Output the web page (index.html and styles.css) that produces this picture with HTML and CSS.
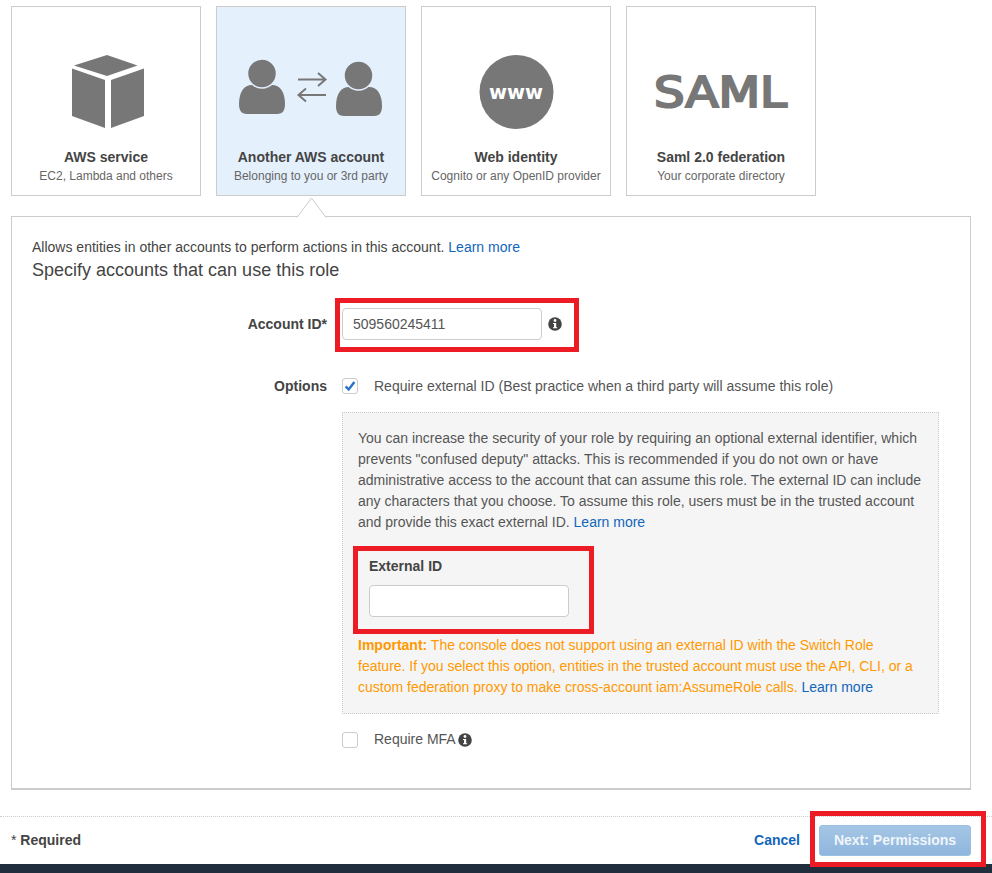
FILE: index.html
```html
<!DOCTYPE html>
<html lang="en">
<head>
<meta charset="utf-8">
<title>Create role</title>
<link rel="stylesheet" href="styles.css">
</head>
<body>
<div class="page">
  <div class="tiles">
    <div class="tile">
      <svg class="tile-icon" viewBox="12 7 188 130"><path class="ico" d="M107 55L137.500 65.500L107 76L74 65.500Z"/><path class="ico" d="M72 68.500L105 80V128L72 116Z"/><path class="ico" d="M144 68.500L111 80V128L144 116Z"/></svg>
      <div class="tile-title">AWS service</div>
      <div class="tile-sub">EC2, Lambda and others</div>
    </div>
    <div class="tile tile-active">
      <svg class="tile-icon" viewBox="217 7 188 130">
        <path class="ico" d="M239 104C239 92 244 85 252 85H272C280 85 285 92 285 104C285 110 283 114 277 114H247C241 114 239 110 239 104Z"/>
        <circle class="ico head" cx="262" cy="73.500" r="14.500"/>
        <path class="ico" d="M336 106C336 94 341 87 349 87H369C377 87 382 94 382 106C382 112 380 116 374 116H344C338 116 336 112 336 106Z"/>
        <circle class="ico head" cx="358.500" cy="75.500" r="14.500"/>
        <path class="arrow" d="M298 79.500H325M318 73L325.500 79.500L318 86"/>
        <path class="arrow" d="M326 95H299M306 88.500L298.500 95L306 101.500"/>
      </svg>
      <div class="tile-title">Another AWS account</div>
      <div class="tile-sub">Belonging to you or 3rd party</div>
    </div>
    <div class="tile">
      <svg class="tile-icon" viewBox="422 7 188 130"><circle class="ico" cx="516.500" cy="92" r="37"/><text class="www" x="489" y="99" textLength="54" lengthAdjust="spacingAndGlyphs">www</text></svg>
      <div class="tile-title">Web identity</div>
      <div class="tile-sub">Cognito or any OpenID provider</div>
    </div>
    <div class="tile">
      <svg class="tile-icon" viewBox="627 7 188 130"><text class="saml" x="654" y="107" textLength="133" lengthAdjust="spacingAndGlyphs">SAML</text></svg>
      <div class="tile-title">Saml 2.0 federation</div>
      <div class="tile-sub">Your corporate directory</div>
    </div>
  </div>

  <section class="panel">
    <svg class="tip" viewBox="0 0 32 22"><path d="M1 20.500L15.500 1L30 20.500" /></svg>
    <p class="intro">Allows entities in other accounts to perform actions in this account. <a class="link">Learn more</a></p>
    <h2 class="heading">Specify accounts that can use this role</h2>

    <div class="row row-account">
      <label class="row-label">Account ID*</label>
      <div class="row-field">
        <input class="text-input" type="text" value="509560245411">
        <svg class="info" viewBox="0 0 14 14"><use href="#i-info"/></svg>
      </div>
    </div>

    <div class="row row-options">
      <label class="row-label">Options</label>
      <div class="row-field">
        <span class="check check-on"><svg viewBox="0 0 16 16"><path d="M3 8.500L6.500 12L13 3.500" /></svg></span>
        <span class="check-label">Require external ID (Best practice when a third party will assume this role)</span>
      </div>
    </div>

    <div class="extbox">
      <p class="ext-text">You can increase the security of your role by requiring an optional external identifier, which prevents "confused deputy" attacks. This is recommended if you do not own or have administrative access to the account that can assume this role. The external ID can include any characters that you choose. To assume this role, users must be in the trusted account and provide this exact external ID. <a class="link">Learn more</a></p>
      <div class="ext-field">
        <label class="ext-label">External ID</label>
        <input class="text-input" type="text">
      </div>
      <p class="warn"><b>Important:</b> The console does not support using an external ID with the Switch Role feature. If you select this option, entities in the trusted account must use the API, CLI, or a custom federation proxy to make cross-account iam:AssumeRole calls. <a class="link">Learn more</a></p>
    </div>

    <div class="mfa">
      <span class="check"></span>
      <span class="check-label">Require MFA</span>
      <svg class="info info-mfa" viewBox="0 0 14 14"><use href="#i-info"/></svg>
    </div>
  </section>

  <footer class="foot">
    <div class="req"><span class="star">*</span> Required</div>
    <div class="actions">
      <a class="cancel">Cancel</a>
      <button class="next" type="button">Next: Permissions</button>
    </div>
  </footer>
  <div class="darkbar"></div>

  <div class="mark mark-account"></div>
  <div class="mark mark-ext"></div>
  <div class="mark mark-next"></div>
</div>
<svg class="defs" width="0" height="0"><defs><g id="i-info"><circle cx="7" cy="7" r="6.800" fill="#444"/><circle cx="7" cy="3.500" r="1.400" fill="#fff"/><path d="M5 6H8.200V10.200H9.200V11.300H5V10.200H6V7.100H5Z" fill="#fff"/></g></defs></svg>
</body>
</html>
```
FILE: styles.css
```css
* { box-sizing: border-box; }
html, body { margin: 0; padding: 0; background: #fff; }
body { font-family: "Liberation Sans", Arial, sans-serif; font-size: 14px; line-height: 21px; color: #444; overflow: hidden; }
.page { position: relative; width: 992px; height: 873px; overflow: hidden; }
.defs { position: absolute; }

.tiles { display: flex; gap: 15px; padding: 6px 0 0 11px; }
.tile { width: 190px; height: 190px; border: 1px solid #ccc; background: #fff; text-align: center; }
.tile-active { background: #e4f1fd; }
.tile-icon { display: block; width: 188px; height: 130px; margin-bottom: 10px; }
.tile-title { font-weight: 700; font-size: 14px; line-height: 21px; color: #444; }
.tile-sub { font-size: 12px; line-height: 16px; color: #666; margin-top: 0; }
.ico { fill: #777; }
.head { stroke-width: 1.500; }
.tile-active .head { stroke: #e4f1fd; }
.arrow { fill: none; stroke: #777; stroke-width: 2; }
.www { fill: #fff; font-family: "DejaVu Sans", sans-serif; font-weight: 700; font-size: 19px; }
.saml { fill: #777; stroke: #777; stroke-width: 2.200; font-family: "DejaVu Sans", sans-serif; font-weight: 400; font-size: 42px; }

.panel { position: relative; width: 960px; height: 574px; margin: 20px 0 0 11px; border: 1px solid #ccc; border-bottom-width: 2px; padding: 20px 20px 0; }
.tip { position: absolute; left: 284px; top: -20px; width: 32px; height: 22px; overflow: visible; }
.tip path { fill: #fff; stroke: #ccc; stroke-width: 1; }
.intro { margin: 0; font-size: 14px; line-height: 21px; }
.link { color: #16b; }
.heading { margin: 1px 0 0; font-size: 18px; line-height: 23px; font-weight: 400; color: #444; }

.row { display: flex; align-items: center; }
.row-account { margin-top: 26px; height: 32px; }
.row-options { margin-top: 30px; height: 32px; }
.row-label { width: 295px; text-align: right; font-weight: 700; }
.row-field { display: flex; align-items: center; margin-left: 15px; }
.text-input { width: 200px; height: 32px; border: 1px solid #ccc; border-radius: 4px; padding: 0 10px; background: #fff; font: 14px/21px "Liberation Sans", Arial, sans-serif; color: #555; outline: none; }
.info { width: 14px; height: 14px; margin-left: 6px; }

.check { display: inline-block; width: 16px; height: 16px; border: 1px solid #ccc; border-radius: 3px; background: #fff; flex: none; }
.check svg { display: block; width: 14px; height: 14px; }
.check path { fill: none; stroke: #2a73c5; stroke-width: 2.800; }
.check-label { margin-left: 16px; color: #555; }

.extbox { width: 597px; height: 302px; margin: 10px 0 0 310px; border: 1px dotted #ccc; background: #f5f5f5; padding: 15px; }
.ext-text { margin: 0; color: #555; }
.ext-field { margin: 23px 0 0 11px; width: 200px; }
.ext-label { display: block; font-weight: 700; line-height: 21px; margin-bottom: 8px; }
.warn { margin: 18px 0 0; color: #f90; }
.warn .link { color: #16b; }

.mfa { display: flex; align-items: center; margin: 15px 0 0 310px; height: 21px; }
.info-mfa { margin-left: 2px; }

.foot { display: flex; justify-content: space-between; align-items: center; height: 48px; margin-top: 26px; border-top: 1px dotted #ccc; padding: 0 21px 0 11px; }
.req { font-weight: 700; color: #444; }
.star { font-weight: 400; }
.actions { display: flex; align-items: center; gap: 19px; }
.cancel { color: #16b; font-weight: 700; }
.next { width: 152px; height: 31px; border: 1px solid #9bbfe0; border-radius: 3px; background: linear-gradient(#a5c6e5, #8fb6de); color: #f0f5fa; font: 700 14px/21px "Liberation Sans", Arial, sans-serif; padding: 0; }
.darkbar { height: 9px; background: #202d3c; }

.mark { position: absolute; border: 5px solid #ed1c24; pointer-events: none; }
.mark-account { left: 335px; top: 298px; width: 244px; height: 54px; }
.mark-ext { left: 353px; top: 546px; width: 241px; height: 88px; }
.mark-next { left: 810px; top: 811px; width: 176px; height: 56px; }
```
